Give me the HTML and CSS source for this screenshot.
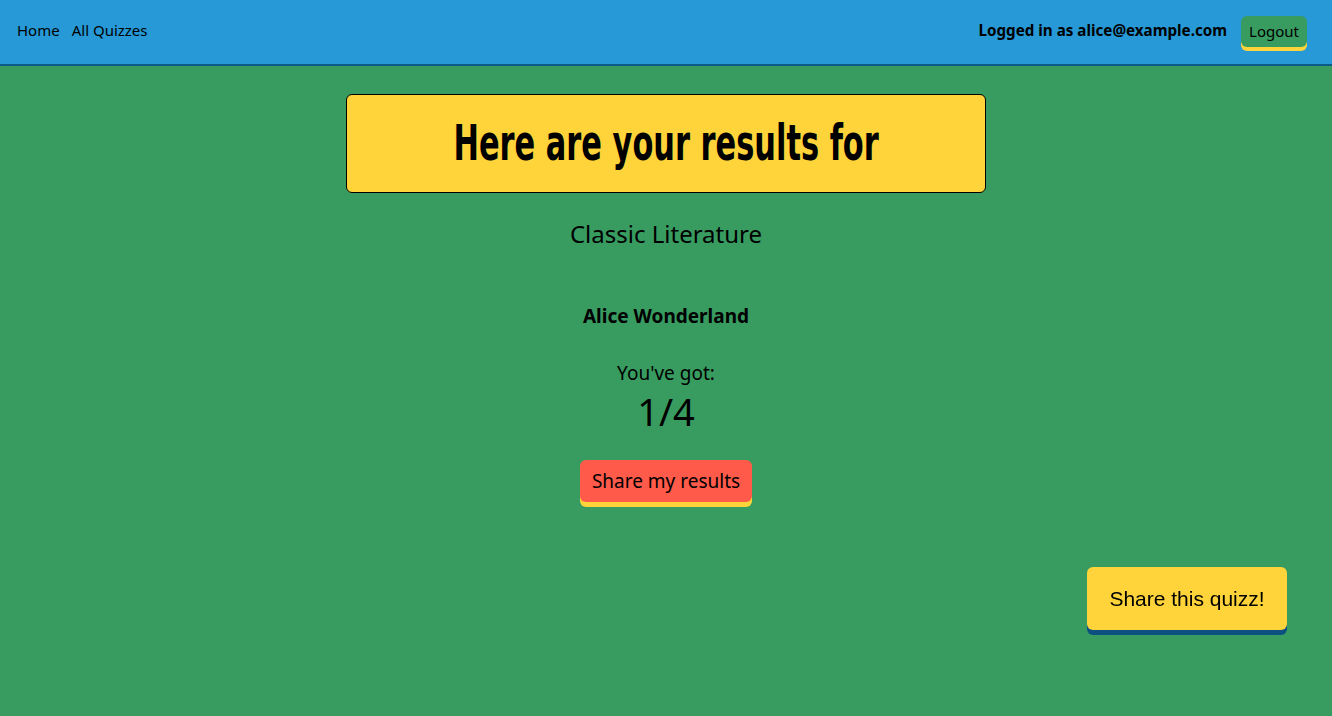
FILE: index.html
```html
<!DOCTYPE html>
<html lang="en">
<head>
<meta charset="utf-8">
<title>Quiz results</title>
<link rel="stylesheet" href="styles.css">
</head>
<body>
<header class="topbar">
  <nav class="nav">
    <a class="nav-link" href="#">Home</a>
    <a class="nav-link" href="#">All Quizzes</a>
  </nav>
  <div class="user">
    <span class="user-label">Logged in as alice@example.com</span>
    <button class="btn btn-logout">Logout</button>
  </div>
</header>
<main class="main">
  <div class="title-box"><h1 class="title">Here are your results for</h1></div>
  <h2 class="quiz-name">Classic Literature</h2>
  <h3 class="player">Alice Wonderland</h3>
  <p class="got">You've got:</p>
  <p class="score">1/4</p>
  <button class="btn btn-share">Share my results</button>
</main>
<button class="btn btn-quiz">Share this quizz!</button>
</body>
</html>
```
FILE: styles.css
```css
html, body {
  margin: 0;
  padding: 0;
  height: 100%;
}
body {
  background: #389c60;
  font-family: "Noto Sans", sans-serif;
  color: #000;
}
.topbar {
  height: 60px;
  background: #2699d6;
  border-bottom: 2px solid #0b5a89;
  display: flex;
  align-items: center;
  justify-content: space-between;
  padding: 0 25px 4px 17px;
  box-sizing: content-box;
}
.nav {
  display: flex;
  gap: 12px;
}
.nav-link {
  color: #000;
  text-decoration: none;
  font-size: 15px;
}
.user {
  display: flex;
  align-items: center;
  gap: 14px;
}
.user-label {
  font-weight: bold;
  font-size: 15.2px;
}
.btn {
  border: none;
  cursor: pointer;
  font-family: inherit;
  color: #000;
}
.btn-logout {
  background: #389c60;
  font-size: 15px;
  height: 31px;
  padding: 0 8px;
  border-radius: 6px;
  box-shadow: 0 4px 0 #ffd43a;
  margin-top: 2px;
}
.main {
  display: flex;
  flex-direction: column;
  align-items: center;
  padding-top: 28px;
}
.title-box {
  width: 640px;
  height: 99px;
  box-sizing: border-box;
  background: #ffd43a;
  border: 1px solid #000;
  border-radius: 6px;
  display: flex;
  align-items: center;
  justify-content: center;
}
.title {
  margin: 0;
  font-family: "DejaVu Sans Condensed", "DejaVu Sans", sans-serif;
  font-weight: bold;
  font-size: 49px;
  display: inline-block;
  white-space: nowrap;
  transform: scaleX(0.69);
}
.quiz-name {
  margin: 25px 0 0;
  font-weight: normal;
  font-size: 24px;
  line-height: 32px;
}
.player {
  margin: 52px 0 0;
  font-size: 19px;
  line-height: 28px;
}
.got {
  margin: 30px 0 0;
  font-size: 19px;
  line-height: 26px;
}
.score {
  margin: 0;
  font-size: 38px;
  line-height: 50px;
}
.btn-share {
  margin-top: 24px;
  background: #ff5a4a;
  font-size: 19px;
  height: 42px;
  padding: 0 12px;
  border-radius: 6px;
  box-shadow: 0 5px 0 #ffd43a;
}
.btn-quiz {
  position: fixed;
  right: 45px;
  top: 567px;
  width: 200px;
  height: 63px;
  background: #ffd43a;
  font-family: "Liberation Sans", Arial, sans-serif;
  font-size: 21px;
  border-radius: 6px;
  box-shadow: 0 5px 0 #0b5080;
}
```
